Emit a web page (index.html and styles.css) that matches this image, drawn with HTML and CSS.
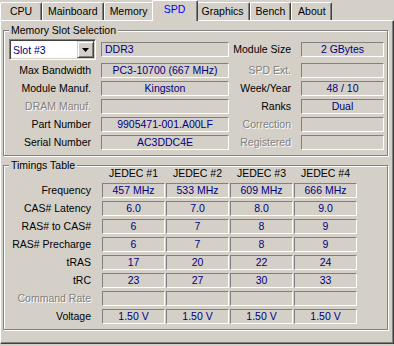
FILE: index.html
```html
<!DOCTYPE html>
<html lang="en">
<head>
  <meta charset="UTF-8" />
  <title>CPU-Z SPD</title>
  <link rel="stylesheet" href="styles.css">
</head>
<body>

  <div class="tabs">
    <div class="tab">CPU</div>
    <div class="tab">Mainboard</div>
    <div class="tab">Memory</div>
    <div class="tab active">SPD</div>
    <div class="tab">Graphics</div>
    <div class="tab">Bench</div>
    <div class="tab">About</div>
  </div>

  <div class="panel">
    <div class="group slots">
      <span class="caption">Memory Slot Selection</span>
      <div class="slot-grid">
        <div class="select">
          <span class="select-text">Slot #3</span>
          <span class="drop-btn">
            <svg width="7" height="4" viewBox="0 0 7 4"><polygon points="0,0 7,0 3.5,4" fill="#000"/></svg>
          </span>
        </div>
        <div class="field left">DDR3</div>
        <div class="label">Module Size</div>
        <div class="field">2 GBytes</div>

        <div class="label">Max Bandwidth</div>
        <div class="field">PC3-10700 (667 MHz)</div>
        <div class="label off">SPD Ext.</div>
        <div class="field"></div>

        <div class="label">Module Manuf.</div>
        <div class="field">Kingston</div>
        <div class="label">Week/Year</div>
        <div class="field">48 / 10</div>

        <div class="label off">DRAM Manuf.</div>
        <div class="field"></div>
        <div class="label">Ranks</div>
        <div class="field">Dual</div>

        <div class="label">Part Number</div>
        <div class="field">9905471-001.A00LF</div>
        <div class="label off">Correction</div>
        <div class="field"></div>

        <div class="label">Serial Number</div>
        <div class="field">AC3DDC4E</div>
        <div class="label off">Registered</div>
        <div class="field"></div>
      </div>
    </div>

    <div class="group timings">
      <span class="caption">Timings Table</span>
      <div class="timing-grid">
        <div></div>
        <div class="head">JEDEC #1</div>
        <div class="head">JEDEC #2</div>
        <div class="head">JEDEC #3</div>
        <div class="head">JEDEC #4</div>

        <div class="label">Frequency</div>
        <div class="field">457 MHz</div>
        <div class="field">533 MHz</div>
        <div class="field">609 MHz</div>
        <div class="field">666 MHz</div>

        <div class="label">CAS# Latency</div>
        <div class="field">6.0</div>
        <div class="field">7.0</div>
        <div class="field">8.0</div>
        <div class="field">9.0</div>

        <div class="label">RAS# to CAS#</div>
        <div class="field">6</div>
        <div class="field">7</div>
        <div class="field">8</div>
        <div class="field">9</div>

        <div class="label">RAS# Precharge</div>
        <div class="field">6</div>
        <div class="field">7</div>
        <div class="field">8</div>
        <div class="field">9</div>

        <div class="label">tRAS</div>
        <div class="field">17</div>
        <div class="field">20</div>
        <div class="field">22</div>
        <div class="field">24</div>

        <div class="label">tRC</div>
        <div class="field">23</div>
        <div class="field">27</div>
        <div class="field">30</div>
        <div class="field">33</div>

        <div class="label off">Command Rate</div>
        <div class="field"></div>
        <div class="field"></div>
        <div class="field"></div>
        <div class="field"></div>

        <div class="label">Voltage</div>
        <div class="field">1.50 V</div>
        <div class="field">1.50 V</div>
        <div class="field">1.50 V</div>
        <div class="field">1.50 V</div>
      </div>
    </div>
  </div>

</body>
</html>
```

FILE: styles.css
```css
* {
  box-sizing: border-box;
}

body {
  margin: 0;
  width: 394px;
  height: 346px;
  overflow: hidden;
  background: #d4d0c8;
  font-family: "Liberation Sans", Arial, sans-serif;
  font-size: 10.5px;
  color: #000;
}

/* tab strip */
.tabs {
  display: flex;
  height: 20px;
}

.tab {
  margin-top: 2px;
  height: 18px;
  min-width: 41px;
  padding: 0 5px;
  border: 1px solid #fff;
  border-bottom: 0;
  border-right-color: #404040;
  border-radius: 2px 2px 0 0;
  box-shadow: inset -1px 0 #808080;
  line-height: 16px;
  text-align: center;
  white-space: nowrap;
}

.tab:first-child {
  min-width: 42px;
}

.tab.active {
  position: relative;
  margin: 0 -2px;
  height: 21px;
  min-width: 46px;
  padding: 0 7px;
  background: #d4d0c8;
  color: #0000ff;
}

/* page body */
.panel {
  height: 324px;
  padding: 9px 5px 0 2px;
  border: 1px solid #fff;
  border-right-color: #404040;
  border-bottom-color: #404040;
  box-shadow: inset -1px -1px #808080;
}

.group {
  position: relative;
  border: 1px solid #808080;
  box-shadow: 1px 1px 0 #fff, inset 1px 1px 0 #fff;
  padding: 8px 3px 5px 5px;
}

.group.timings {
  margin-top: 9px;
  padding-top: 1px;
}

.caption {
  position: absolute;
  top: -7px;
  left: 5px;
  padding: 0 2px;
  line-height: 13px;
  background: #d4d0c8;
}

.slot-grid {
  display: grid;
  grid-template-columns: 92px 128px 72px 83px;
  grid-template-rows: 21px;
  grid-auto-rows: 15px;
  row-gap: 3px;
  align-items: center;
}

.timing-grid {
  display: grid;
  grid-template-columns: 92px repeat(4, 63px);
  grid-template-rows: 13px;
  grid-auto-rows: 15px;
  column-gap: 1px;
  row-gap: 3px;
}

.label {
  padding-right: 10px;
  line-height: 15px;
  text-align: right;
  white-space: nowrap;
}

.label.off {
  color: #808080;
  text-shadow: 1px 1px 0 #fff;
}

.head {
  line-height: 13px;
  text-align: center;
  white-space: nowrap;
}

.field {
  height: 15px;
  border: 1px solid;
  border-color: #808080 #fff #fff #808080;
  line-height: 13px;
  text-align: center;
  color: #000080;
  white-space: nowrap;
  overflow: hidden;
}

.field.left {
  text-align: left;
  padding-left: 3px;
}

/* combo box */
.select {
  display: flex;
  align-items: center;
  width: 87px;
  height: 21px;
  padding: 1px;
  border: 1px solid;
  border-color: #808080 #fff #fff #808080;
  box-shadow: inset 1px 1px #404040, inset -1px -1px #d4d0c8;
  background: #fff;
  color: #000080;
}

.select-text {
  flex: 1;
  padding-left: 2px;
}

.drop-btn {
  display: flex;
  align-items: center;
  justify-content: center;
  width: 17px;
  height: 17px;
  border: 1px solid;
  border-color: #d4d0c8 #404040 #404040 #d4d0c8;
  box-shadow: inset 1px 1px #fff, inset -1px -1px #808080;
  background: #d4d0c8;
}
```
